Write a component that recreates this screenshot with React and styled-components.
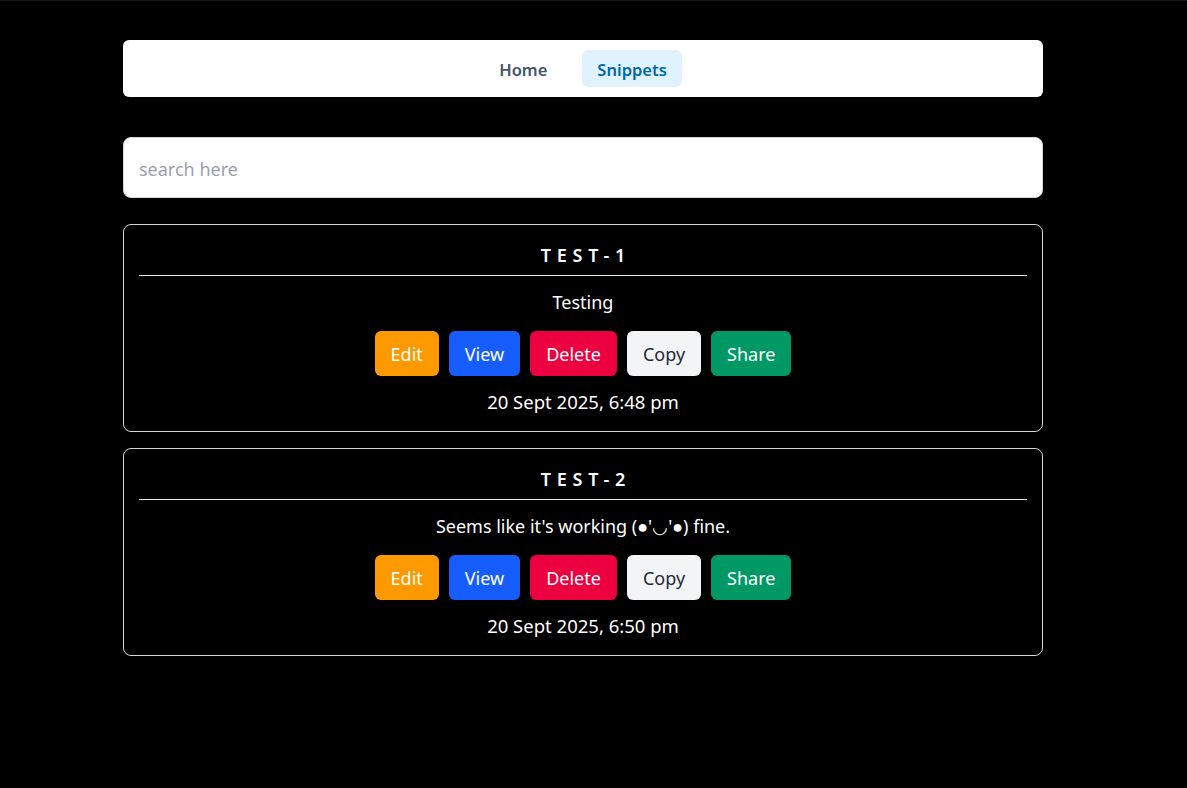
import React, { useState } from 'react';
import styled, { createGlobalStyle } from 'styled-components';

const GlobalStyle = createGlobalStyle`
    * {
        box-sizing: border-box;
    }
    html, body {
        margin: 0;
        padding: 0;
        background: #000;
    }
    body {
        font-family: 'Noto Sans', 'Open Sans', sans-serif;
        color: #fff;
        border-top: 1px solid #161616;
        min-height: 788px;
    }
`;

const Page = styled.div`
    width: 920px;
    margin: 0 0 0 123px;
    padding-top: 39px;
`;

const NavBar = styled.nav`
    background: #fff;
    border-radius: 6px;
    height: 57px;
    display: flex;
    align-items: center;
    justify-content: center;
    gap: 20px;
`;

const NavLink = styled.a`
    font-size: 16.5px;
    font-weight: 600;
    line-height: 35px;
    height: 37px;
    padding: 2px 15px 0;
    border-radius: 6px;
    text-decoration: none;
    cursor: pointer;
    color: ${(props) => (props.active ? '#0069a8' : '#45556c')};
    background: ${(props) => (props.active ? '#dff2fe' : 'transparent')};
`;

const SearchInput = styled.input`
    display: block;
    width: 100%;
    height: 61px;
    margin-top: 40px;
    padding: 2px 15px 0;
    border: 1px solid #d1d5dc;
    border-radius: 8px;
    background: #fff;
    font-family: inherit;
    font-size: 18px;
    color: #1e2939;
    outline: none;

    &::placeholder {
        color: #99a1af;
    }
`;

const List = styled.div`
    display: flex;
    flex-direction: column;
    gap: 16px;
    margin-top: 26px;
`;

const Card = styled.div`
    border: 1px solid #d1d5dc;
    border-radius: 8px;
    padding: 16px 15px 15px;
    display: flex;
    flex-direction: column;
    align-items: center;
`;

const Title = styled.h3`
    margin: 0;
    width: 100%;
    text-align: center;
    font-size: 18px;
    font-weight: 600;
    line-height: 28px;
    letter-spacing: 0.32em;
    text-indent: 0.32em;
    text-transform: uppercase;
    padding-bottom: 6px;
    border-bottom: 1px solid #e5e7eb;
`;

const Description = styled.p`
    margin: 12px 0 0;
    font-size: 18px;
    line-height: 28px;
`;

const Actions = styled.div`
    display: flex;
    gap: 10px;
    margin-top: 15px;
`;

const palette = {
    edit: { bg: '#fe9a00', fg: '#fff' },
    view: { bg: '#155dfc', fg: '#fff' },
    delete: { bg: '#ec003f', fg: '#fff' },
    copy: { bg: '#f3f4f6', fg: '#1e2939' },
    share: { bg: '#009966', fg: '#fff' },
};

const ActionButton = styled.button`
    height: 45px;
    padding: 0 16px;
    border: none;
    border-radius: 6px;
    font-family: inherit;
    font-size: 18px;
    line-height: 28px;
    cursor: pointer;
    background: ${(props) => palette[props.kind].bg};
    color: ${(props) => palette[props.kind].fg};
`;

const DateText = styled.p`
    margin: 12px 0 0;
    font-size: 18.5px;
    line-height: 28px;
`;

const snippets = [
    { id: 1, title: 'test-1', body: 'Testing', date: '20 Sept 2025, 6:48 pm' },
    { id: 2, title: 'test-2', body: "Seems like it's working (●'◡'●) fine.", date: '20 Sept 2025, 6:50 pm' },
];

const App = () => {
    const [query, setQuery] = useState('');

    const shown = snippets.filter((s) =>
        (s.title + ' ' + s.body).toLowerCase().includes(query.toLowerCase())
    );

    return (
        <>
            <GlobalStyle />
            <Page>
                <NavBar>
                    <NavLink>Home</NavLink>
                    <NavLink active>Snippets</NavLink>
                </NavBar>

                <SearchInput
                    type="text"
                    value={query}
                    onChange={(e) => setQuery(e.target.value)}
                    placeholder="search here"
                />

                <List>
                    {shown.map((s) => (
                        <Card key={s.id}>
                            <Title>{s.title}</Title>
                            <Description>{s.body}</Description>
                            <Actions>
                                <ActionButton kind="edit">Edit</ActionButton>
                                <ActionButton kind="view">View</ActionButton>
                                <ActionButton kind="delete">Delete</ActionButton>
                                <ActionButton kind="copy">Copy</ActionButton>
                                <ActionButton kind="share">Share</ActionButton>
                            </Actions>
                            <DateText>{s.date}</DateText>
                        </Card>
                    ))}
                </List>
            </Page>
        </>
    );
};

export default App;
